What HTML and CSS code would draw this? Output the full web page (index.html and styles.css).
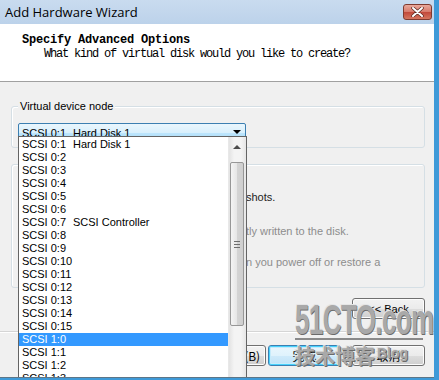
FILE: index.html
```html
<!DOCTYPE html>
<html lang="en">
<head>
    <meta charset="UTF-8">
    <title>Add Hardware Wizard</title>
    <link rel="stylesheet" href="styles.css">
</head>
<body>
    <div class="window">
        <!-- Title bar -->
        <div class="titlebar">
            <span class="title">Add Hardware Wizard</span>
            <button class="close-btn">
                <svg width="13" height="10" viewBox="0 0 13 10">
                    <path d="M2 1 L11 9 M11 1 L2 9" stroke="#5a2a22" stroke-width="3.4" stroke-linecap="round"/>
                    <path d="M2 1 L11 9 M11 1 L2 9" stroke="#ffffff" stroke-width="2" stroke-linecap="round"/>
                </svg>
            </button>
        </div>

        <!-- Wizard header -->
        <div class="header">
            <div class="header-title">Specify Advanced Options</div>
            <div class="header-sub">What kind of virtual disk would you like to create?</div>
        </div>

        <!-- Page content -->
        <div class="main">
            <div class="group group-node">
                <span class="group-label">Virtual device node</span>
                <div class="combo">
                    <span class="combo-col">SCSI 0:1</span>
                    <span>Hard Disk 1</span>
                    <span class="combo-arrow"></span>
                </div>
            </div>

            <div class="group group-mode">
                <p class="mode-line">shots.</p>
                <p class="mode-line mode-off mode-second">tly written to the disk.</p>
                <p class="mode-line mode-off mode-third">n you power off or restore a</p>
            </div>

            <div class="back-row">
                <button class="btn">&lt;&lt; Back</button>
            </div>
        </div>

        <!-- Wizard buttons -->
        <div class="footer">
            <button class="btn btn-cjk">&lt; 上一步(B)</button>
            <button class="btn btn-cjk btn-default">完成</button>
            <button class="btn btn-cjk btn-cancel">取消</button>
        </div>

        <!-- Open drop-down list of the combo box -->
        <div class="dropdown">
            <div class="dropdown-items">
                <div class="item"><span class="combo-col">SCSI 0:1</span>Hard Disk 1</div>
                <div class="item">SCSI 0:2</div>
                <div class="item">SCSI 0:3</div>
                <div class="item">SCSI 0:4</div>
                <div class="item">SCSI 0:5</div>
                <div class="item">SCSI 0:6</div>
                <div class="item"><span class="combo-col">SCSI 0:7</span>SCSI Controller</div>
                <div class="item">SCSI 0:8</div>
                <div class="item">SCSI 0:9</div>
                <div class="item">SCSI 0:10</div>
                <div class="item">SCSI 0:11</div>
                <div class="item">SCSI 0:12</div>
                <div class="item">SCSI 0:13</div>
                <div class="item">SCSI 0:14</div>
                <div class="item">SCSI 0:15</div>
                <div class="item item-selected">SCSI 1:0</div>
                <div class="item">SCSI 1:1</div>
                <div class="item">SCSI 1:2</div>
                <div class="item">SCSI 1:3</div>
            </div>
            <div class="scrollbar">
                <div class="scroll-up"></div>
                <div class="scroll-thumb"><span class="grip"></span></div>
            </div>
        </div>

        <!-- Blog watermark -->
        <div class="watermark">
            <div class="wm-site">51CTO.com</div>
            <div class="wm-blog">技术博客<span class="wm-tag">Blog</span></div>
        </div>
    </div>
</body>
</html>
```

FILE: styles.css
```css
body {
    margin: 0;
    padding: 0;
    background: #3f9ad8;
    font-family: "Liberation Sans", Arial, sans-serif;
}

.window {
    position: relative;
    width: 434px;
    height: 377px;
    background: #f0f0f0;
    border-bottom: 1px solid #5d7688;
    overflow: hidden;
}

/* Title bar */
.titlebar {
    height: 24px;
    box-sizing: border-box;
    display: flex;
    justify-content: space-between;
    align-items: flex-start;
    padding: 0 2px 0 5px;
    background: linear-gradient(to bottom, #c9dbef, #bcd2ea);
}

.title {
    font-family: "Open Sans", sans-serif;
    font-size: 13px;
    line-height: 25px;
    color: #000;
}

.close-btn {
    margin-top: 4px;
    width: 29px;
    height: 16px;
    padding: 0;
    border: 1px solid #7f3b30;
    border-radius: 3px;
    background: linear-gradient(to bottom, #e9a99b, #d7796a 50%, #c1483a 51%, #d5765f);
    display: flex;
    align-items: center;
    justify-content: center;
}

/* Header */
.header {
    height: 58px;
    box-sizing: border-box;
    background: #fff;
    border-bottom: 1px solid #a0a0a0;
    padding: 9px 0 0 22px;
    font-family: "Liberation Mono", monospace;
    font-size: 12px;
    line-height: 14px;
    color: #000;
}

.header-title {
    font-weight: bold;
    letter-spacing: -0.2px;
}

.header-sub {
    padding-left: 22px;
    letter-spacing: -1.2px;
}

/* Main */
.main {
    padding: 24px 9px 12px 11px;
    font-size: 11px;
}

.group {
    box-sizing: border-box;
    border: 1px solid #d5dfe5;
    border-radius: 3px;
    box-shadow: inset 1px 1px 0 #fff;
}

.group-node {
    height: 42px;
}

.group-label {
    display: inline-block;
    margin: -7px 0 0 6px;
    padding: 0 2px;
    line-height: 12px;
    background: #f0f0f0;
    color: #000;
    vertical-align: top;
}

.combo {
    position: relative;
    box-sizing: border-box;
    width: 228px;
    height: 19px;
    margin: 4px 0 0 6px;
    padding-left: 3px;
    display: flex;
    align-items: center;
    border: 1px solid #3c7fb1;
    border-radius: 2px;
    background: linear-gradient(to bottom, #eaf6fd, #d9f0fc 50%, #bee6fd 51%, #a7d9f5);
    color: #000;
}

.combo-col {
    display: inline-block;
    width: 51px;
}

.combo-arrow {
    position: absolute;
    right: 4px;
    top: 6px;
    border-left: 4px solid transparent;
    border-right: 4px solid transparent;
    border-top: 4px solid #000;
}

.group-mode {
    height: 124px;
    margin-top: 16px;
    padding: 25px 0 0 234px;
}

.mode-line {
    margin: 0;
    line-height: 14px;
    color: #222;
    white-space: nowrap;
}

.mode-off {
    color: #8d8d8d;
}

.mode-second {
    margin-top: 20px;
}

.mode-third {
    margin-top: 17px;
}

.back-row {
    display: flex;
    justify-content: flex-end;
    margin-top: 10px;
}

/* Buttons */
.btn {
    width: 73px;
    height: 21px;
    padding: 0;
    border: 1px solid #707070;
    border-radius: 3px;
    background: linear-gradient(to bottom, #f2f2f2, #ebebeb 50%, #dddddd 51%, #cfcfcf);
    box-shadow: inset 0 0 0 1px #fcfcfc;
    font-family: "Liberation Sans", Arial, sans-serif;
    font-size: 11px;
    color: #000;
}

.btn-cjk {
    font-family: "Noto Sans CJK SC", sans-serif;
    font-size: 12px;
}

.btn-default {
    margin-left: 2px;
    border-color: #3c7fb1;
    box-shadow: inset 0 0 0 1px #48d2fd, inset 0 0 0 2px #c6ebfb;
    background: linear-gradient(to bottom, #eaf6fd, #dff2fc 50%, #cfeafa 51%, #bfe3f8);
}

.btn-cancel {
    margin-left: 11px;
}

.footer {
    display: flex;
    justify-content: flex-end;
    border-top: 1px solid #d5d5d5;
    box-shadow: inset 0 1px 0 #fff;
    padding: 13px 9px 0 0;
}

/* Drop-down list */
.dropdown {
    position: absolute;
    left: 18px;
    top: 136px;
    width: 229px;
    height: 250px;
    box-sizing: border-box;
    display: flex;
    border: 1px solid #646464;
    padding-top: 1px;
    background: #fff;
}

.dropdown-items {
    flex: 1;
    font-size: 11px;
    color: #000;
}

.item {
    height: 13px;
    line-height: 13px;
    padding-left: 3px;
    white-space: nowrap;
}

.item-selected {
    background: #3399ff;
    color: #fff;
}

.scrollbar {
    width: 17px;
    margin-top: -1px;
    background: linear-gradient(to right, #e3e3e3, #f4f4f4 30%, #f4f4f4 70%, #e6e6e6);
    border-left: 1px solid #e8e8e8;
}

.scroll-up {
    position: relative;
    height: 17px;
}

.scroll-up::after {
    content: "";
    position: absolute;
    left: 4px;
    top: 8px;
    border-left: 4px solid transparent;
    border-right: 4px solid transparent;
    border-bottom: 4px solid #4d4d4d;
}

.scroll-thumb {
    width: 14px;
    height: 164px;
    margin: 8px 0 0 1px;
    box-sizing: border-box;
    border: 1px solid #979797;
    border-radius: 2px;
    background: linear-gradient(to right, #f4f4f4, #e6e6e6 50%, #d4d4d4 51%, #cfcfcf);
    display: flex;
    align-items: center;
    justify-content: center;
}

.grip {
    width: 6px;
    height: 5px;
    border-top: 1px solid #6e6e6e;
    border-bottom: 1px solid #6e6e6e;
    background: linear-gradient(to bottom, transparent 2px, #6e6e6e 2px, #6e6e6e 3px, transparent 3px);
}

/* Watermark */
.watermark {
    position: absolute;
    left: 295px;
    top: 302px;
    width: 128px;
    color: #a9a9a9;
    pointer-events: none;
}

.wm-site {
    font-family: "Liberation Sans", sans-serif;
    font-weight: bold;
    font-size: 42px;
    line-height: 36px;
    letter-spacing: -1px;
    white-space: nowrap;
    transform: scaleX(0.62);
    transform-origin: left;
    text-shadow: 1px 1px 0 #6b6b6b, -1px -1px 0 #e5e5e5;
}

.wm-blog {
    border-top: 2px solid #8a8a8a;
    padding-top: 2px;
    font-family: "Noto Sans CJK SC", sans-serif;
    font-weight: bold;
    font-size: 20px;
    line-height: 22px;
    white-space: nowrap;
    text-shadow: 1px 1px 0 #6b6b6b, -1px -1px 0 #e5e5e5;
}

.wm-tag {
    font-family: "Liberation Sans", sans-serif;
    font-size: 14px;
    vertical-align: 6px;
    margin-left: 2px;
}
```
